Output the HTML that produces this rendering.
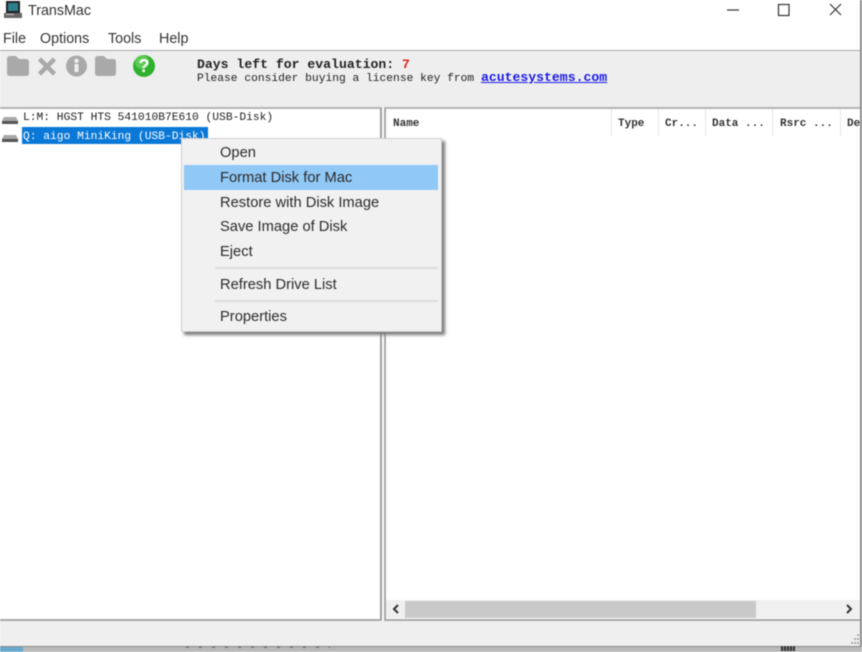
<!DOCTYPE html>
<html><head><meta charset="utf-8"><style>
html,body{margin:0;padding:0;width:862px;height:652px;overflow:hidden;background:#fff}
#r{position:relative;width:862px;height:652px;overflow:hidden;filter:blur(.4px);font-family:"Liberation Sans",sans-serif;color:#222}
#r div,#r svg{position:absolute}
.t{white-space:pre;line-height:18px;font-size:14.3px;color:#333}
.m{font-family:"Liberation Mono",monospace;white-space:pre;line-height:14px;color:#222}
.h{font-family:"Liberation Mono",monospace;white-space:pre;font-size:11px;font-weight:bold;color:#333;top:117px;line-height:14px}
.s{width:1px;height:27px;top:109px;background:#e6e6e6}
.i{font-size:14.7px;left:220px;line-height:20px;white-space:pre;color:#2b2b2b}
</style></head><body><div id="r">
<svg style="left:3px;top:1px" width="20" height="18" viewBox="0 0 20 18"><rect x="3" y="0" width="14" height="12" fill="#222"/><rect x="5" y="2" width="10" height="8" fill="#2f7f8f"/><rect x="1" y="12" width="18" height="5" fill="#666"/><rect x="3" y="13" width="8" height="1" fill="#ccc"/></svg>
<div class="t" style="left:28px;top:2px">TransMac</div>
<svg style="left:720px;top:0" width="130" height="20" viewBox="0 0 130 20" fill="none" stroke="#333" stroke-width="1.2"><path d="M7 10H19"/><rect x="58.500" y="4.500" width="10.500" height="11"/><path d="M110 4L121 15M121 4L110 15"/></svg>
<div class="t" style="left:3px;top:30px">File</div>
<div class="t" style="left:40px;top:30px">Options</div>
<div class="t" style="left:108px;top:30px">Tools</div>
<div class="t" style="left:159px;top:30px">Help</div>

<div style="left:0;top:50px;width:862px;height:57px;background:#eeeeee;border-top:1px solid #a8a8a8;box-sizing:border-box"></div>
<svg style="left:6px;top:54px" width="152" height="26" viewBox="0 0 152 26">
<path d="M1 5Q1 2 4 2H10L13 5H20Q23 5 23 8V19Q23 22 20 22H4Q1 22 1 19Z" fill="#a9a9a9"/>
<path d="M33.500 5L48.500 20M48.500 5L33.500 20" stroke="#a9a9a9" stroke-width="4.500" fill="none"/>
<circle cx="70.500" cy="12" r="10.500" fill="#a9a9a9"/><rect x="68.500" y="10" width="4" height="8" fill="#eee"/><circle cx="70.500" cy="6.800" r="2.200" fill="#eee"/>
<path d="M89 5Q89 2 92 2H98L101 5H107Q110 5 110 8V19Q110 22 107 22H92Q89 22 89 19Z" fill="#a9a9a9"/>
<circle cx="138" cy="12" r="11" fill="#2fb02f"/><circle cx="136" cy="8" r="7" fill="#7fdc6f" opacity=".6"/>
</svg>
<div style="left:133px;top:54px;width:22px;height:24px;line-height:24px;text-align:center;color:#fff;font-weight:bold;font-size:18px">?</div>
<div class="m" style="left:197px;top:58px;font-size:13.15px;font-weight:bold;color:#222">Days left for evaluation: <span style="color:#e02020">7</span></div>
<div class="m" style="left:197px;top:71px;font-size:11.27px">Please consider buying a license key from <span style="color:#1a1ae8;font-weight:bold;text-decoration:underline;font-size:13.15px">acutesystems.com</span></div>

<div style="left:0;top:107px;width:382px;height:514px;background:#fff;border-top:2px solid #b4b4b4;border-right:2px solid #a0a0a0;border-bottom:2px solid #a8a8a8;box-sizing:border-box"></div>
<div style="left:384px;top:107px;width:476px;height:514px;background:#fff;border-top:2px solid #b4b4b4;border-left:2px solid #a8a8a8;border-bottom:2px solid #a8a8a8;box-sizing:border-box"></div>

<svg style="left:2px;top:115px" width="16" height="11" viewBox="0 0 16 11"><path d="M2 2H14L16 6H0Z" fill="#a8a8a8"/><rect x="0" y="6" width="16" height="3" fill="#555"/></svg>
<svg style="left:2px;top:133px" width="16" height="11" viewBox="0 0 16 11"><path d="M2 2H14L16 6H0Z" fill="#a8a8a8"/><rect x="0" y="6" width="16" height="3" fill="#555"/></svg>
<div class="m" style="left:23px;top:111px;font-size:11.27px">L:M: HGST HTS 541010B7E610 (USB-Disk)</div>
<div style="left:22px;top:127px;width:186px;height:17px;background:#0a78d7"></div>
<div class="m" style="left:23px;top:130px;font-size:11.27px;color:#fff">Q: aigo MiniKing (USB-Disk)</div>

<div class="h" style="left:393px">Name</div><div class="s" style="left:611px"></div>
<div class="h" style="left:618px">Type</div><div class="s" style="left:658px"></div>
<div class="h" style="left:665px">Cr...</div><div class="s" style="left:705px"></div>
<div class="h" style="left:712px">Data ...</div><div class="s" style="left:772px"></div>
<div class="h" style="left:780px">Rsrc ...</div><div class="s" style="left:840px"></div>
<div class="h" style="left:847px;width:13px;overflow:hidden">De</div>

<div style="left:386px;top:600px;width:474px;height:18px;background:#f0f0f0"></div>
<div style="left:405px;top:601px;width:351px;height:17px;background:#c9c9c9"></div>
<svg style="left:390px;top:603px" width="12" height="12" viewBox="0 0 12 12"><path d="M8 2L4 6L8 10" fill="none" stroke="#333" stroke-width="2"/></svg>
<svg style="left:843px;top:603px" width="12" height="12" viewBox="0 0 12 12"><path d="M4 2L8 6L4 10" fill="none" stroke="#333" stroke-width="2"/></svg>

<div style="left:0;top:621px;width:862px;height:26px;background:#efefef"></div>
<div style="left:0;top:646px;width:862px;height:6px;background:#b9b9b9;border-top:1px solid #888;box-sizing:border-box"></div>
<div style="left:0;top:647px;width:23px;height:5px;background:#69a9d0"></div>
<div style="left:186px;top:646px;width:144px;height:2px;background:repeating-linear-gradient(90deg,#777 0 3px,transparent 3px 13px)"></div>
<div style="left:781px;top:646px;width:14px;height:5px;background:repeating-linear-gradient(90deg,#333 0 2px,#999 2px 3px)"></div>
<div style="left:860px;top:0;width:2px;height:646px;background:#8a8a8a"></div>
<svg style="left:849px;top:632px" width="12" height="13" viewBox="0 0 12 13" fill="#aaa"><rect x="8" y="2" width="2" height="2"/><rect x="5" y="6" width="2" height="2"/><rect x="8" y="6" width="2" height="2"/><rect x="2" y="10" width="2" height="2"/><rect x="5" y="10" width="2" height="2"/><rect x="8" y="10" width="2" height="2"/></svg>

<div style="left:181px;top:138px;width:261px;height:194px;background:#f1f1f1;border:1px solid #cfcfcf;box-sizing:border-box;box-shadow:3px 3px 3px #777"></div>
<div style="left:184px;top:165px;width:254px;height:25px;background:#90c8f6"></div>
<div class="i" style="top:143px">Open</div>
<div class="i" style="top:168px">Format Disk for Mac</div>
<div class="i" style="top:193px">Restore with Disk Image</div>
<div class="i" style="top:217px">Save Image of Disk</div>
<div class="i" style="top:242px">Eject</div>
<div style="left:215px;top:267px;width:223px;height:2px;background:#dcdcdc"></div>
<div class="i" style="top:275px">Refresh Drive List</div>
<div style="left:215px;top:300px;width:223px;height:2px;background:#dcdcdc"></div>
<div class="i" style="top:307px">Properties</div>
</div></body></html>
